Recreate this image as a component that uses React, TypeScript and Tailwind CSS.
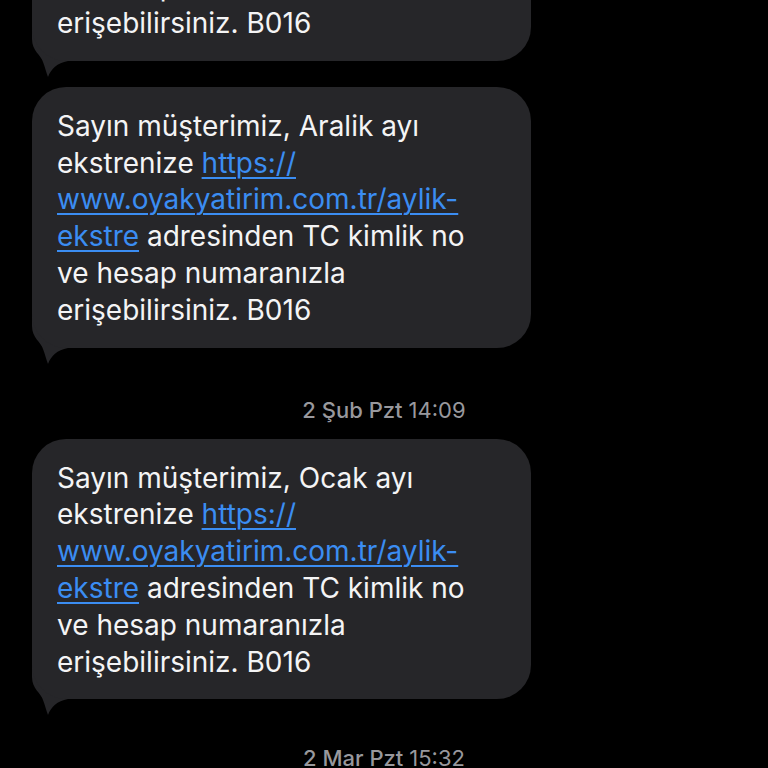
import React from "react";

const FONT = { fontFamily: 'Inter, "Noto Sans", "Liberation Sans", sans-serif' };

function Tail() {
  return (
    <svg
      className="absolute left-0 bottom-[-16px]"
      width="44"
      height="56"
      viewBox="0 -40 44 56"
    >
      <path
        d="M0,-40 L0,-22 C0,-10 9,-6 11,1 C13,6 14,11 16,16 C19,8 25,2 36,0 L44,0 L44,-40 Z"
        fill="#262629"
      />
    </svg>
  );
}

function Link({ children }: { children: React.ReactNode }) {
  return (
    <span className="text-[#3b8df2] underline decoration-[#3b8df2] decoration-[1.5px] underline-offset-[4px]">
      {children}
    </span>
  );
}

function Bubble({ month }: { month: string }) {
  return (
    <div className="relative w-[499px] ml-[32px]">
      <div className="relative z-10 rounded-[34px] bg-[#262629] pl-[25px] pr-[20px] pt-[21px] pb-[19px] text-[28px] leading-[36.8px] text-[#f4f4f5] whitespace-nowrap">
        Sayın müşterimiz, {month} ayı
        <br />
        ekstrenize <Link>https://</Link>
        <br />
        <Link>www.oyakyatirim.com.tr/aylik-</Link>
        <br />
        <Link>ekstre</Link> adresinden TC kimlik no
        <br />
        ve hesap numaranızla
        <br />
        erişebilirsiniz. B016
      </div>
      <Tail />
    </div>
  );
}

function Stamp({ date, time }: { date: string; time: string }) {
  return (
    <div className="flex justify-center text-[22px] leading-[24px] text-[#98989d]">
      <span className="font-medium">{date}</span>
      <span className="ml-[6px]">{time}</span>
    </div>
  );
}

export default function App() {
  return (
    <div className="h-[768px] w-[768px] overflow-hidden bg-black" style={FONT}>
      <div className="-mt-[200px] flex flex-col">
        <Bubble month="Kasım" />
        <div className="h-[26px]" />
        <Bubble month="Aralik" />
        <div className="mt-[50px]">
          <Stamp date="2 Şub Pzt" time="14:09" />
        </div>
        <div className="mt-[17px]">
          <Bubble month="Ocak" />
        </div>
        <div className="mt-[47px]">
          <Stamp date="2 Mar Pzt" time="15:32" />
        </div>
      </div>
    </div>
  );
}
